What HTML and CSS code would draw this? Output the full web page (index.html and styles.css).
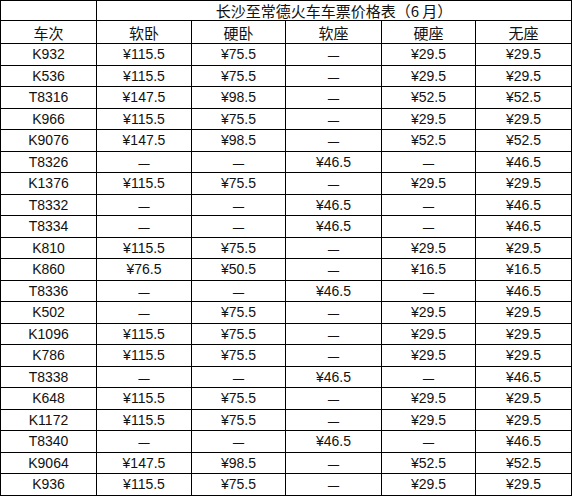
FILE: index.html
```html
<!DOCTYPE html>
<html lang="zh">
<head>
<meta charset="utf-8">
<title>长沙至常德火车车票价格表</title>
<link rel="stylesheet" href="styles.css">
</head>
<body>
<table class="fares">
  <colgroup>
    <col class="c1"><col class="c2"><col class="c3"><col class="c4"><col class="c5"><col class="c6">
  </colgroup>
  <thead>
    <tr class="title-row"><th></th><th colspan="5" class="title">长沙至常德火车车票价格表（6 月）</th></tr>
    <tr class="head-row"><th>车次</th><th>软卧</th><th>硬卧</th><th>软座</th><th>硬座</th><th>无座</th></tr>
  </thead>
  <tbody>
    <tr><td>K932</td><td>¥115.5</td><td>¥75.5</td><td class="dash">—</td><td>¥29.5</td><td>¥29.5</td></tr>
    <tr><td>K536</td><td>¥115.5</td><td>¥75.5</td><td class="dash">—</td><td>¥29.5</td><td>¥29.5</td></tr>
    <tr><td>T8316</td><td>¥147.5</td><td>¥98.5</td><td class="dash">—</td><td>¥52.5</td><td>¥52.5</td></tr>
    <tr><td>K966</td><td>¥115.5</td><td>¥75.5</td><td class="dash">—</td><td>¥29.5</td><td>¥29.5</td></tr>
    <tr><td>K9076</td><td>¥147.5</td><td>¥98.5</td><td class="dash">—</td><td>¥52.5</td><td>¥52.5</td></tr>
    <tr><td>T8326</td><td class="dash">—</td><td class="dash">—</td><td>¥46.5</td><td class="dash">—</td><td>¥46.5</td></tr>
    <tr><td>K1376</td><td>¥115.5</td><td>¥75.5</td><td class="dash">—</td><td>¥29.5</td><td>¥29.5</td></tr>
    <tr><td>T8332</td><td class="dash">—</td><td class="dash">—</td><td>¥46.5</td><td class="dash">—</td><td>¥46.5</td></tr>
    <tr><td>T8334</td><td class="dash">—</td><td class="dash">—</td><td>¥46.5</td><td class="dash">—</td><td>¥46.5</td></tr>
    <tr><td>K810</td><td>¥115.5</td><td>¥75.5</td><td class="dash">—</td><td>¥29.5</td><td>¥29.5</td></tr>
    <tr><td>K860</td><td>¥76.5</td><td>¥50.5</td><td class="dash">—</td><td>¥16.5</td><td>¥16.5</td></tr>
    <tr><td>T8336</td><td class="dash">—</td><td class="dash">—</td><td>¥46.5</td><td class="dash">—</td><td>¥46.5</td></tr>
    <tr><td>K502</td><td class="dash">—</td><td>¥75.5</td><td class="dash">—</td><td>¥29.5</td><td>¥29.5</td></tr>
    <tr><td>K1096</td><td>¥115.5</td><td>¥75.5</td><td class="dash">—</td><td>¥29.5</td><td>¥29.5</td></tr>
    <tr><td>K786</td><td>¥115.5</td><td>¥75.5</td><td class="dash">—</td><td>¥29.5</td><td>¥29.5</td></tr>
    <tr><td>T8338</td><td class="dash">—</td><td class="dash">—</td><td>¥46.5</td><td class="dash">—</td><td>¥46.5</td></tr>
    <tr><td>K648</td><td>¥115.5</td><td>¥75.5</td><td class="dash">—</td><td>¥29.5</td><td>¥29.5</td></tr>
    <tr><td>K1172</td><td>¥115.5</td><td>¥75.5</td><td class="dash">—</td><td>¥29.5</td><td>¥29.5</td></tr>
    <tr><td>T8340</td><td class="dash">—</td><td class="dash">—</td><td>¥46.5</td><td class="dash">—</td><td>¥46.5</td></tr>
    <tr><td>K9064</td><td>¥147.5</td><td>¥98.5</td><td class="dash">—</td><td>¥52.5</td><td>¥52.5</td></tr>
    <tr><td>K936</td><td>¥115.5</td><td>¥75.5</td><td class="dash">—</td><td>¥29.5</td><td>¥29.5</td></tr>
  </tbody>
</table>
</body>
</html>
```
FILE: styles.css
```css
html, body {
  margin: 0;
  padding: 0;
  background: #ffffff;
}

.fares {
  border-collapse: collapse;
  table-layout: fixed;
  width: 571px;
  font-family: "Liberation Sans", "Noto Sans CJK SC", sans-serif;
  color: #111111;
}

.c1 { width: 96px; }
.c2 { width: 95px; }
.c3 { width: 94px; }
.c4 { width: 96px; }
.c5 { width: 94px; }
.c6 { width: 96px; }

.fares th,
.fares td {
  border: 1px solid #000000;
  padding: 0;
  text-align: center;
  vertical-align: middle;
  line-height: 1;
  white-space: nowrap;
}

.fares th {
  font-weight: normal;
  font-size: 15px;
  font-family: "Noto Sans CJK SC", "Liberation Sans", sans-serif;
}

.title-row th {
  height: 19px;
}

.title {
  font-size: 15px;
}

.head-row th {
  height: 22px;
}

.fares td {
  font-size: 14px;
  height: 20.5px;
}

.fares td.dash {
  font-family: "Noto Sans CJK SC", sans-serif;
}
```
